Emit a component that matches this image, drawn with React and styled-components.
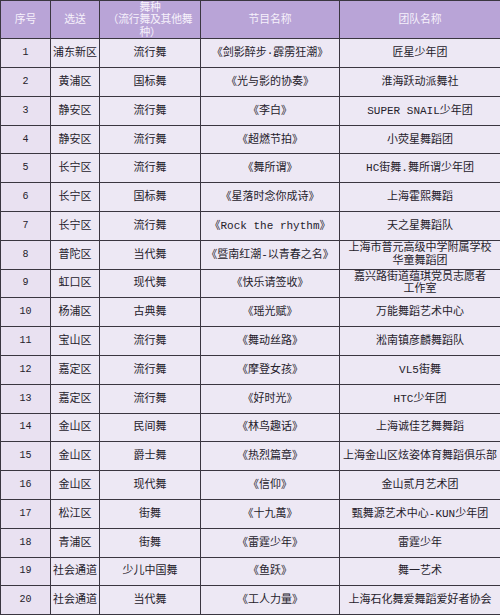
import React from "react";
import styled, { createGlobalStyle } from "styled-components";

const Global = createGlobalStyle`
  html, body { margin: 0; padding: 0; background: #ffffff; }
  body { width: 500px; height: 616px; overflow: hidden; }
`;

const Table = styled.table`
  width: 500px;
  border-collapse: collapse;
  table-layout: fixed;
  font-family: "Liberation Mono", "Noto Sans CJK SC", monospace;
  font-size: 11px;
  color: #25212b;
`;

const HeadCell = styled.th`
  height: 37px;
  padding: 0;
  background: #b9a4d7;
  color: #f6f1fb;
  font-weight: normal;
  font-family: "Liberation Sans", "Noto Sans CJK SC", sans-serif;
  font-size: 10.8px;
  line-height: 12.4px;
  border: 1px solid #3a3640;
  text-align: center;
  vertical-align: middle;
`;

const HeadLine = styled.span`
  display: block;
  white-space: nowrap;
  letter-spacing: -0.2px;
`;

const Row = styled.tr`
  height: 28.8px;
`;

const Cell = styled.td`
  padding: 0;
  background: ${(p) => (p.$first ? "#e9e1f1" : "#ede8f4")};
  border: 1px solid #3a3640;
  text-align: center;
  vertical-align: middle;
  line-height: ${(p) => (p.$tight ? "12.5px" : "14px")};
  font-size: ${(p) => (p.$num ? "10px" : "11px")};
  white-space: nowrap;
  overflow: hidden;
`;

const rows = [
  ["1", "浦东新区", "流行舞", "《剑影醉步·霹雳狂潮》", "匠星少年团"],
  ["2", "黄浦区", "国标舞", "《光与影的协奏》", "淮海跃动派舞社"],
  ["3", "静安区", "流行舞", "《李白》", "SUPER SNAIL少年团"],
  ["4", "静安区", "流行舞", "《超燃节拍》", "小荧星舞蹈团"],
  ["5", "长宁区", "流行舞", "《舞所谓》", "HC街舞.舞所谓少年团"],
  ["6", "长宁区", "国标舞", "《星落时念你成诗》", "上海霍熙舞蹈"],
  ["7", "长宁区", "流行舞", "《Rock the rhythm》", "天之星舞蹈队"],
  ["8", "普陀区", "当代舞", "《暨南红潮-以青春之名》", ["上海市普元高级中学附属学校", "华童舞蹈团"]],
  ["9", "虹口区", "现代舞", "《快乐请签收》", ["嘉兴路街道蕴琪党员志愿者", "工作室"]],
  ["10", "杨浦区", "古典舞", "《瑶光赋》", "万能舞蹈艺术中心"],
  ["11", "宝山区", "流行舞", "《舞动丝路》", "淞南镇彦麟舞蹈队"],
  ["12", "嘉定区", "流行舞", "《摩登女孩》", "VL5街舞"],
  ["13", "嘉定区", "流行舞", "《好时光》", "HTC少年团"],
  ["14", "金山区", "民间舞", "《林鸟趣话》", "上海诚佳艺舞舞蹈"],
  ["15", "金山区", "爵士舞", "《热烈篇章》", "上海金山区炫姿体育舞蹈俱乐部"],
  ["16", "金山区", "现代舞", "《信仰》", "金山贰月艺术团"],
  ["17", "松江区", "街舞", "《十九萬》", "甄舞源艺术中心-KUN少年团"],
  ["18", "青浦区", "街舞", "《雷霆少年》", "雷霆少年"],
  ["19", "社会通道", "少儿中国舞", "《鱼跃》", "舞一艺术"],
  ["20", "社会通道", "当代舞", "《工人力量》", "上海石化舞爱舞蹈爱好者协会"],
];

function Content({ value }) {
  if (Array.isArray(value)) {
    return (
      <>
        {value[0]}
        <br />
        {value[1]}
      </>
    );
  }
  return value;
}

export default function App() {
  return (
    <>
      <Global />
      <Table>
        <colgroup>
          <col style={{ width: 50 }} />
          <col style={{ width: 49 }} />
          <col style={{ width: 101 }} />
          <col style={{ width: 139 }} />
          <col style={{ width: 161 }} />
        </colgroup>
        <thead>
          <tr>
            <HeadCell>序号</HeadCell>
            <HeadCell>选送</HeadCell>
            <HeadCell>
              <HeadLine>舞种</HeadLine>
              <HeadLine>（流行舞及其他舞</HeadLine>
              <HeadLine>种）</HeadLine>
            </HeadCell>
            <HeadCell>节目名称</HeadCell>
            <HeadCell>团队名称</HeadCell>
          </tr>
        </thead>
        <tbody>
          {rows.map((r) => (
            <Row key={r[0]}>
              <Cell $first $num>{r[0]}</Cell>
              <Cell>{r[1]}</Cell>
              <Cell>{r[2]}</Cell>
              <Cell>{r[3]}</Cell>
              <Cell $tight={Array.isArray(r[4])}>
                <Content value={r[4]} />
              </Cell>
            </Row>
          ))}
        </tbody>
      </Table>
    </>
  );
}
